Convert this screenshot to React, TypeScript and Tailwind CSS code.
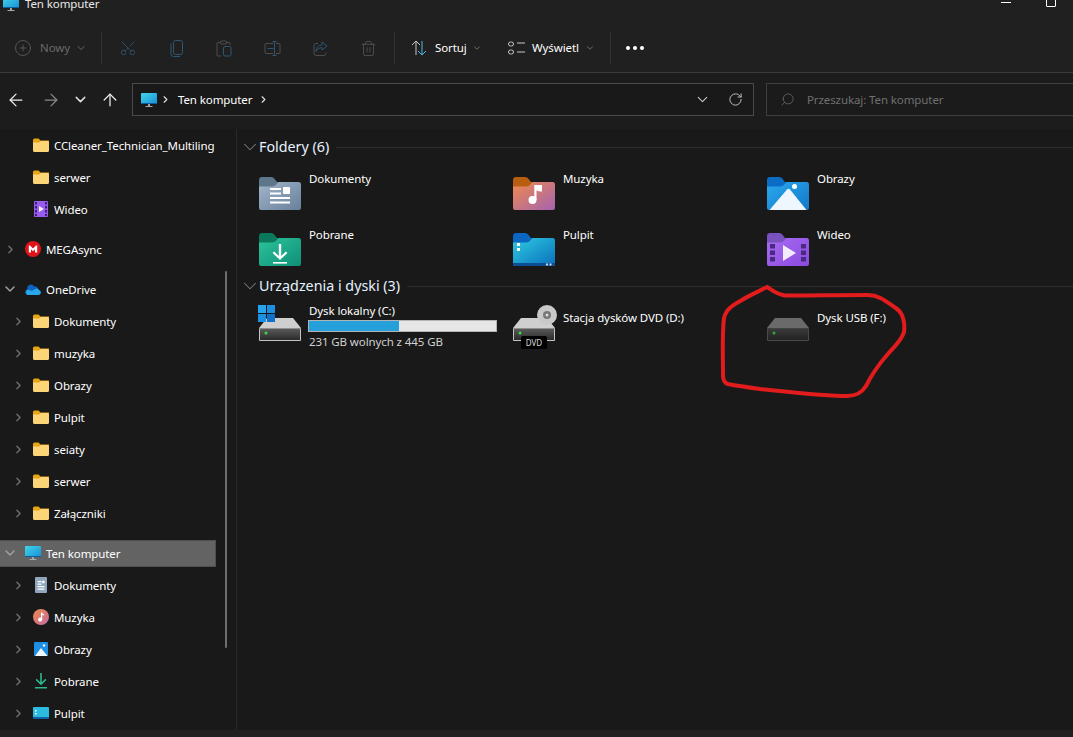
import React from "react";
import { ChevronDown, ChevronRight, ArrowLeft, ArrowRight, ArrowUp, RotateCw, Search, Scissors, Trash2, CirclePlus } from "lucide-react";

function Folder({ id, tab, from, to, children }: { id: string; tab: string; from: string; to: string; children?: React.ReactNode }) {
  return (
    <svg width="42" height="33" viewBox="0 0 42 33" className="shrink-0">
      <defs>
        <linearGradient id={id} x1="0" y1="0" x2="1" y2="1">
          <stop offset="0" stopColor={from} />
          <stop offset="1" stopColor={to} />
        </linearGradient>
      </defs>
      <path d="M0 3a3 3 0 0 1 3-3h9c2 0 3 1 4 2.500l2 2.500h21a3 3 0 0 1 3 3v4H0z" fill={tab} />
      <path d="M0 9.500h13c2 0 3-.5 4.500-2.200L19.500 5H39a3 3 0 0 1 3 3v23a2 2 0 0 1-2 2H2a2 2 0 0 1-2-2z" fill={`url(#${id})`} />
      {children}
    </svg>
  );
}

const DocIcon = () => (
  <Folder id="fdoc" tab="#5d7689" from="#a3b6cc" to="#67809a">
    <path d="M11 11h11v2H11zM11 15.500h11v2H11zM11 20h20v2H11zM11 24.500h20v2H11z" fill="#fff" />
    <rect x="24" y="10" width="7" height="7" rx="1" fill="#fff" />
  </Folder>
);
const MusicIcon = () => (
  <Folder id="fmus" tab="#b85e10" from="#f08a4e" to="#a463b0">
    <circle cx="19.500" cy="23" r="4" fill="#fff" />
    <rect x="21.300" y="8" width="2.200" height="15" fill="#fff" />
    <path d="M23 8h6v6.500c-2.500 0-4.500-.5-6-1.500z" fill="#fff" />
  </Folder>
);
const PicIcon = () => (
  <Folder id="fpic" tab="#0a6cc4" from="#2aa9ee" to="#1478c8">
    <circle cx="27.500" cy="9.500" r="2.500" fill="#fff" />
    <path d="M2.500 33L20 12.500c1-1 2-1 3 0L39.500 33z" fill="#eef7fd" />
  </Folder>
);
const DlIcon = () => (
  <Folder id="fdl" tab="#0b7a5c" from="#2cc49a" to="#0f8f78">
    <path d="M19.800 11h2.400v12l4.600-4.600 1.600 1.600L21 27l-7.400-7 1.600-1.600 4.600 4.600z" fill="#fff" />
    <rect x="14" y="29" width="14" height="1.600" fill="#fff" />
  </Folder>
);
const DeskIcon = () => (
  <Folder id="fdesk" tab="#0a66c0" from="#2ecbe0" to="#0a70bc">
    <rect x="4" y="10" width="3" height="3" fill="#fff" />
    <rect x="4" y="15" width="3" height="3" fill="#fff" />
    <rect x="0" y="30" width="42" height="3" fill="#0c4f92" />
    <rect x="33" y="30.500" width="2" height="2" fill="#cde" />
    <rect x="36.500" y="30.500" width="2" height="2" fill="#cde" />
  </Folder>
);
const VidIcon = () => (
  <Folder id="fvid" tab="#7a52c0" from="#a86cf0" to="#8a4ae0">
    <path d="M3 11h5v4.500H3zM3 17.500h5V22H3zM3 24h5v4.500H3zM34 11h5v4.500h-5zM34 17.500h5V22h-5zM34 24h5v4.500h-5z" fill="#4a2a80" />
    <path d="M16 12l13 8-13 8z" fill="#f2ecfc" />
  </Folder>
);

function Drive({ id, top, f1, f2, edge, led }: { id: string; top: string; f1: string; f2: string; edge: string; led: string }) {
  return (
    <svg width="42" height="23" viewBox="0 0 42 23">
      <defs>
        <linearGradient id={id} x1="0" y1="0" x2="0" y2="1">
          <stop offset="0" stopColor={f1} />
          <stop offset="1" stopColor={f2} />
        </linearGradient>
      </defs>
      <path d="M8 0h26l8 10H0z" fill={top} />
      <rect x="0" y="10" width="42" height="13" rx="1" fill={edge} />
      <rect x="1" y="10.500" width="40" height="11.500" fill={`url(#${id})`} />
      <circle cx="7" cy="15" r="1.500" fill={led} />
    </svg>
  );
}

function FolderSmall() {
  return (
    <svg width="16" height="14" viewBox="0 0 16 14" className="shrink-0">
      <path d="M0 2a1.500 1.500 0 0 1 1.500-1.500h4L7.500 2.500H16V6H0z" fill="#e8a317" />
      <path d="M0 4.500h6L8 3h6.500A1.500 1.500 0 0 1 16 4.500v8a1.500 1.500 0 0 1-1.500 1.500h-13A1.500 1.500 0 0 1 0 12.500z" fill="#fcd676" />
    </svg>
  );
}
const Monitor = () => (
  <svg width="16" height="16" viewBox="0 0 16 16" className="shrink-0">
    <defs>
      <linearGradient id="mon" x1="0" y1="0" x2="1" y2="1">
        <stop offset="0" stopColor="#3fd6e8" />
        <stop offset="1" stopColor="#1a8fd8" />
      </linearGradient>
    </defs>
    <rect x="0" y="1" width="16" height="11" rx="1" fill="url(#mon)" />
    <rect x="0" y="11" width="16" height="1" fill="#0a5fa0" />
    <rect x="7" y="12" width="2" height="2" fill="#9aa" />
    <rect x="4.500" y="14" width="7" height="1" fill="#aaa" />
  </svg>
);
const VideoSmall = () => (
  <svg width="14" height="16" viewBox="0 0 14 16">
    <rect width="14" height="16" rx="1" fill="#9a5cf0" />
    <path d="M1 1h2v2.500H1zM1 5h2v2.500H1zM1 9h2v2.500H1zM1 13h2v2H1zM11 1h2v2.500h-2zM11 5h2v2.500h-2zM11 9h2v2.500h-2zM11 13h2v2h-2z" fill="#3c2370" />
    <path d="M5 5l5 3-5 3z" fill="#eee" />
  </svg>
);
const Mega = () => (
  <svg width="16" height="16" viewBox="0 0 16 16">
    <circle cx="8" cy="8" r="8" fill="#e0131a" />
    <path d="M3.800 4.500h1.200L8 7.500l3-3h1.200v7H10V8.300L8 10.300 6 8.300v3.200H3.800z" fill="#fff" />
  </svg>
);
const Cloud = () => (
  <svg width="16" height="11" viewBox="0 0 16 11">
    <path d="M2.500 5.200a3.600 3.600 0 0 1 6.600-2.800A3 3 0 0 1 13 4.800L6 9z" fill="#0a64c0" />
    <path d="M3 11a3 3 0 0 1-.7-5.800L6.500 6.500 11 11z" fill="#1a8ce0" />
    <path d="M3 11h10.500a2.500 2.500 0 0 0 .8-4.800 3 3 0 0 0-3.600-1.400L6.500 7.300 3.400 6.100A2.600 2.600 0 0 0 3 11z" fill="#2aa8ec" />
  </svg>
);
const DocSmall = () => (
  <svg width="12" height="16" viewBox="0 0 12 16">
    <rect width="12" height="16" rx="1" fill="#8fa6bd" />
    <path d="M2.500 4h4v1.200h-4zM2.500 6.500h4v1.200h-4zM2.500 9h7v1.200h-7zM2.500 11.500h7v1.200h-7z" fill="#fff" />
    <rect x="7.200" y="3.800" width="2.400" height="2.400" fill="#fff" />
  </svg>
);
const MusicSmall = () => (
  <svg width="16" height="16" viewBox="0 0 16 16">
    <defs>
      <linearGradient id="ms" x1="0" y1="0" x2="1" y2="1">
        <stop offset="0" stopColor="#ee8a4c" />
        <stop offset="1" stopColor="#c26ba0" />
      </linearGradient>
    </defs>
    <circle cx="8" cy="8" r="8" fill="url(#ms)" />
    <path d="M8 3.500h1.200c.2 1.200 1.200 1.700 2 1.800v1.200c-.8 0-1.500-.3-2-.7V10.500A2 2 0 1 1 8 8.700z" fill="#fff" />
  </svg>
);
const PicSmall = () => (
  <svg width="14" height="14" viewBox="0 0 14 14">
    <rect width="14" height="14" rx="1" fill="#1f8fe4" />
    <circle cx="10" cy="3.500" r="1.200" fill="#fff" />
    <path d="M1 14L7 6l6.500 8z" fill="#eef7fd" />
  </svg>
);
const DlSmall = () => (
  <svg width="14" height="16" viewBox="0 0 14 16">
    <path d="M6.200 0h1.600v9.300l3.500-3.500 1.100 1.100L7 12.300 1.600 6.900l1.100-1.100 3.500 3.500z" fill="#2fb58f" />
    <rect x="1" y="14" width="12" height="1.500" fill="#2fb58f" />
  </svg>
);
const DeskSmall = () => (
  <svg width="16" height="12" viewBox="0 0 16 12">
    <rect width="16" height="11" rx="1" fill="#2bbbe0" />
    <rect y="10" width="16" height="2" fill="#0b62a8" />
    <rect x="2" y="3" width="1.500" height="1.500" fill="#fff" />
    <rect x="2" y="6" width="1.500" height="1.500" fill="#fff" />
  </svg>
);

function Row({ level = 2, icon, label, arrow, open, selected, gap }: { level?: 1 | 2; icon: React.ReactNode; label: string; arrow?: boolean; open?: boolean; selected?: boolean; gap?: boolean }) {
  const chevronMargin = level === 2 ? "ml-[13px]" : "ml-[5px]";
  return (
    <div className={`h-8 w-[216px] shrink-0 flex items-center ${gap ? "mt-2" : ""}`}>
      <div className={`w-full flex items-center h-[27px] ${selected ? "bg-[#636363] border border-[#4f4f4f] border-l-0" : ""}`}>
        <div className={`${chevronMargin} w-[10px] shrink-0 flex justify-center`}>
          {arrow && (open ? <ChevronDown size={16} color="#a0a0a0" strokeWidth={2.250} className="shrink-0" /> : <ChevronRight size={13} color="#707070" strokeWidth={2.500} className="shrink-0" />)}
        </div>
        <div className="ml-[10px] w-4 flex justify-center items-center shrink-0">{icon}</div>
        <span className="ml-[5px] mt-[2px] whitespace-nowrap text-white">{label}</span>
      </div>
    </div>
  );
}

function Tile({ icon, name }: { icon: React.ReactNode; name: string }) {
  return (
    <div className="h-14 flex items-center">
      <div className="w-[50px]">{icon}</div>
      <div className="self-start mt-[5px] text-white leading-[18px]">{name}</div>
    </div>
  );
}

function GroupHead({ label, h }: { label: string; h: string }) {
  return (
    <div className={`${h} flex items-center pl-[2px]`}>
      <ChevronDown size={22} color="#7c7c7c" strokeWidth={1.100} className="shrink-0" />
      <span className="-ml-[2px] text-[14.3px] tracking-normal text-[#e6f2ff] whitespace-nowrap">{label}</span>
      <div className="ml-[7px] flex-1 h-px bg-[#2e2e2e]" />
    </div>
  );
}

const ToolIcon = ({ children }: { children: React.ReactNode }) => <div className="w-12 flex justify-center items-center">{children}</div>;
const Sep = ({ cls = "" }: { cls?: string }) => <div className={`w-px h-8 bg-[#333333] ${cls}`} />;

export default function App() {
  const dis = "#2f5670";
  return (
    <div className="relative h-[737px] w-[1073px] overflow-hidden flex flex-col bg-[#191919] text-white text-[11.5px] tracking-[-0.1px] font-['Noto_Sans','Open_Sans',sans-serif]">
      {/* title bar */}
      <div className="h-6 bg-[#202020] flex items-start overflow-hidden shrink-0">
        <div className="-mt-[5px] ml-[3px] flex items-center">
          <Monitor />
          <span className="ml-[6px] text-[#e8e8e8]">Ten komputer</span>
        </div>
        <div className="ml-auto mr-[17px] flex items-start">
          <div className="mt-[2px] w-[10px] h-px bg-white" />
          <div className="ml-[35px] -mt-[4px] w-[10px] h-[11px] border border-white rounded-[1px]" />
        </div>
      </div>

      {/* toolbar */}
      <div className="h-12 bg-[#202020] flex items-center shrink-0">
        <CirclePlus size={18} color="#5f5f5f" strokeWidth={1.100} className="ml-[14px]" />
        <span className="ml-[8px] w-[32px] text-[#6a6a6a]">Nowy</span>
        <ChevronDown size={12} color="#6a6a6a" strokeWidth={2} className="ml-[3px]" />
        <Sep cls="ml-[14px]" />
        <div className="ml-[2px] flex">
          <ToolIcon><Scissors size={18} color={dis} strokeWidth={1.150} className="-rotate-90" /></ToolIcon>
          <ToolIcon>
            <svg width="13" height="17" viewBox="0 0 13 17" fill="none" stroke={dis} strokeWidth="1">
              <rect x="3.500" y="0.500" width="9" height="14" rx="2" />
              <path d="M1 3.500V14a2.500 2.500 0 0 0 2.500 2.500H10" />
            </svg>
          </ToolIcon>
          <ToolIcon>
            <svg width="16" height="17" viewBox="0 0 16 17" fill="none" stroke="#4d4d4d" strokeWidth="1">
              <path d="M4 2.500H2a1 1 0 0 0-1 1V15a1 1 0 0 0 1 1h3M11 2.500h2a1 1 0 0 1 1 1V5" />
              <rect x="4.500" y="1" width="6" height="3" rx="1" />
              <rect x="7.500" y="6.500" width="7.500" height="9.500" rx="1.500" stroke={dis} />
            </svg>
          </ToolIcon>
          <ToolIcon>
            <svg width="17" height="15" viewBox="0 0 17 15" fill="none" strokeWidth="1">
              <path d="M9 2.500H2a1 1 0 0 0-1 1v8a1 1 0 0 0 1 1h7M12 2.500h3a1 1 0 0 1 1 1v8a1 1 0 0 1-1 1h-3" stroke="#4d4d4d" />
              <path d="M3.500 7.500h6M10.500 1v13M8.500.5h4M8.500 14.500h4" stroke={dis} />
            </svg>
          </ToolIcon>
          <ToolIcon>
            <svg width="15" height="15" viewBox="0 0 15 15" fill="none" strokeWidth="1">
              <path d="M5 2.500H3a2 2 0 0 0-2 2v8a2 2 0 0 0 2 2h8a2 2 0 0 0 2-2v-1" stroke="#4d4d4d" />
              <path d="M9 1l5 4-5 4V6.700c-3 0-4.800 1.300-6 3.800 0-4 2.500-6.500 6-6.500z" stroke={dis} />
            </svg>
          </ToolIcon>
          <ToolIcon><Trash2 size={17} color="#5a5a5a" strokeWidth={1.100} /></ToolIcon>
        </div>
        <Sep cls="ml-[2px]" />
        <svg width="16" height="16" viewBox="0 0 16 16" fill="none" strokeWidth="1" className="ml-[16px]">
          <path d="M5 15V1M1 5l4-4 4 4" stroke="#c8c8c8" />
          <path d="M11 1v14M7 11l4 4 4-4" stroke="#4fb8ee" />
        </svg>
        <span className="ml-[8px] w-[33px] text-white">Sortuj</span>
        <ChevronDown size={10} color="#9a9a9a" strokeWidth={1.500} className="ml-[4px]" />
        <svg width="17" height="14" viewBox="0 0 17 14" fill="none" stroke="#c8c8c8" strokeWidth="1" className="ml-[26px]">
          <rect x="0.500" y="1" width="5" height="4" rx="2" />
          <rect x="0.500" y="9" width="5" height="4" rx="2" />
          <path d="M9 2h8M9 11h8" />
        </svg>
        <span className="ml-[7px] w-[47px] whitespace-nowrap text-white">Wyświetl</span>
        <ChevronDown size={10} color="#9a9a9a" strokeWidth={1.500} className="ml-[6px]" />
        <Sep cls="ml-[15px]" />
        <div className="ml-[15px] flex gap-[3px]">
          <div className="w-[4px] h-[4px] rounded-full bg-white" />
          <div className="w-[4px] h-[4px] rounded-full bg-white" />
          <div className="w-[4px] h-[4px] rounded-full bg-white" />
        </div>
      </div>
      <div className="h-px bg-[#3a3a3a] shrink-0" />

      {/* navigation row */}
      <div className="h-14 bg-[#1c1c1c] flex items-start pt-[10px] shrink-0">
        <div className="w-[132px] shrink-0 h-[33px] flex items-center">
          <ArrowLeft size={20} color="#f0f0f0" strokeWidth={1.500} className="ml-[6px] shrink-0" />
          <ArrowRight size={20} color="#8a8a8a" strokeWidth={1.500} className="ml-[15px] shrink-0" />
          <ChevronDown size={17} color="#e0e0e0" strokeWidth={2} className="ml-[11px] shrink-0" />
          <ArrowUp size={20} color="#f0f0f0" strokeWidth={1.500} className="ml-[11px] shrink-0" />
        </div>
        <div className="shrink-0 w-[622px] h-[33px] border border-[#4a4a4a] bg-[#191919] flex items-center">
          <div className="ml-2"><Monitor /></div>
          <ChevronRight size={11} color="#e0e0e0" strokeWidth={2.500} className="ml-[3px]" />
          <span className="ml-[7px] text-white">Ten komputer</span>
          <ChevronRight size={11} color="#e0e0e0" strokeWidth={2.500} className="ml-[6px]" />
          <ChevronDown size={17} color="#c8c8c8" strokeWidth={1.500} className="ml-auto mr-[17px]" />
          <RotateCw size={15} color="#c8c8c8" strokeWidth={1.500} className="mr-[10px]" />
        </div>
        <div className="shrink-0 ml-3 w-[320px] h-[33px] border border-[#3f3f3f] bg-[#1b1b1b] flex items-center">
          <Search size={15} color="#6a6a6a" strokeWidth={1.250} className="ml-[13px] -scale-x-100" />
          <span className="ml-[12px] text-[#6f6f6f]">Przeszukaj: Ten komputer</span>
        </div>
      </div>

      {/* body */}
      <div className="flex-1 min-h-0 flex">
        <div className="relative w-[237px] shrink-0 border-r border-[#2a2a2a] overflow-hidden flex flex-col">
          <Row icon={<FolderSmall />} label="CCleaner_Technician_Multiling" />
          <Row icon={<FolderSmall />} label="serwer" />
          <Row icon={<VideoSmall />} label="Wideo" />
          <Row level={1} arrow icon={<Mega />} label="MEGAsync" gap />
          <Row level={1} arrow open icon={<Cloud />} label="OneDrive" gap />
          <Row arrow icon={<FolderSmall />} label="Dokumenty" />
          <Row arrow icon={<FolderSmall />} label="muzyka" />
          <Row arrow icon={<FolderSmall />} label="Obrazy" />
          <Row arrow icon={<FolderSmall />} label="Pulpit" />
          <Row arrow icon={<FolderSmall />} label="seiaty" />
          <Row arrow icon={<FolderSmall />} label="serwer" />
          <Row arrow icon={<FolderSmall />} label="Załączniki" />
          <Row level={1} arrow open selected icon={<Monitor />} label="Ten komputer" gap />
          <Row arrow icon={<DocSmall />} label="Dokumenty" />
          <Row arrow icon={<MusicSmall />} label="Muzyka" />
          <Row arrow icon={<PicSmall />} label="Obrazy" />
          <Row arrow icon={<DlSmall />} label="Pobrane" />
          <Row arrow icon={<DeskSmall />} label="Pulpit" />
          <div className="absolute left-[225px] top-[142px] w-[2px] h-[377px] bg-[#6e6e6e] rounded-full" />
        </div>

        <div className="flex-1 min-w-0 flex flex-col">
          <GroupHead label="Foldery (6)" h="h-9" />
          <div className="pl-[22px] grid grid-cols-[254px_254px_254px]">
            <Tile icon={<DocIcon />} name="Dokumenty" />
            <Tile icon={<MusicIcon />} name="Muzyka" />
            <Tile icon={<PicIcon />} name="Obrazy" />
            <Tile icon={<DlIcon />} name="Pobrane" />
            <Tile icon={<DeskIcon />} name="Pulpit" />
            <Tile icon={<VidIcon />} name="Wideo" />
          </div>
          <GroupHead label="Urządzenia i dyski (3)" h="h-[18px]" />
          <div className="pl-[22px] grid grid-cols-[254px_254px_254px]">
            <div className="h-14 flex items-center">
              <div className="relative w-[50px] pt-[12px]">
                <Drive id="d1" top="#cfcfcf" f1="#5c5c5c" f2="#2a2a2a" edge="#c4c4c4" led="#35e03a" />
                <div className="absolute -left-px top-[-1px] grid grid-cols-2 gap-px">
                  <div className="w-2 h-2 bg-[#25a5ee]" />
                  <div className="w-2 h-2 bg-[#1c8fe0]" />
                  <div className="w-2 h-2 bg-[#1c8fe0]" />
                  <div className="w-2 h-2 bg-[#0f72c8]" />
                </div>
              </div>
              <div className="self-start mt-[8px] -ml-px w-[189px]">
                <div className="pl-px leading-[16px] text-white">Dysk lokalny (C:)</div>
                <div className="mt-[1px] h-3 border border-[#b4b4b4] bg-[#e6e6e6]">
                  <div className="w-[48%] h-full bg-[#26a0da]" />
                </div>
                <div className="mt-[1px] pl-px leading-[17px] text-[#d0d0d0]">231 GB wolnych z 445 GB</div>
              </div>
            </div>
            <div className="h-14 flex items-center">
              <div className="relative w-[50px] pt-[12px]">
                <Drive id="d2" top="#cfcfcf" f1="#5c5c5c" f2="#2a2a2a" edge="#c4c4c4" led="#35e03a" />
                <svg width="20" height="20" viewBox="0 0 20 20" className="absolute left-[24px] top-[-1px]">
                  <circle cx="10" cy="10" r="10" fill="#c9c9c9" />
                  <circle cx="10" cy="10" r="4" fill="#777" />
                  <circle cx="10" cy="10" r="1.500" fill="#ddd" />
                </svg>
                <div className="absolute left-2 top-[30px] w-[26px] h-[13px] rounded-[2px] bg-black text-[8px] tracking-normal leading-[13px] text-center text-[#dddddd]">DVD</div>
              </div>
              <div className="self-start mt-[14px] leading-[18px] text-white">Stacja dysków DVD (D:)</div>
            </div>
            <div className="h-14 flex items-center">
              <div className="w-[50px] pt-[12px]">
                <Drive id="d3" top="#6a6a6a" f1="#3a3a3a" f2="#222222" edge="#4a4a4a" led="#2fae35" />
              </div>
              <div className="self-start mt-[14px] leading-[18px] text-white">Dysk USB (F:)</div>
            </div>
          </div>
        </div>
      </div>

      {/* status bar */}
      <div className="h-[7px] bg-[#202020] shrink-0" />

      {/* hand-drawn annotation */}
      <svg width="1073" height="737" viewBox="0 0 1073 737" fill="none" className="absolute inset-0 pointer-events-none">
        <path
          d="M767 287C773 291 778 295 785 295.500C800 296 835 295 868 295C880 295 888 303 897 309C904 314 905 325 904 332C902 340 894 347 887 355C880 363 872 374 866 386C861 394 855 396 847 396C825 396 790 392 760 389C745 387 733 385 728 384C724 383 723 380 723 375C723 355 722 335 724 318C726 309 733 305 742 300C750 295 760 291 767 287z"
          stroke="#e21c1c"
          strokeWidth="4"
          strokeLinejoin="round"
        />
      </svg>
    </div>
  );
}
